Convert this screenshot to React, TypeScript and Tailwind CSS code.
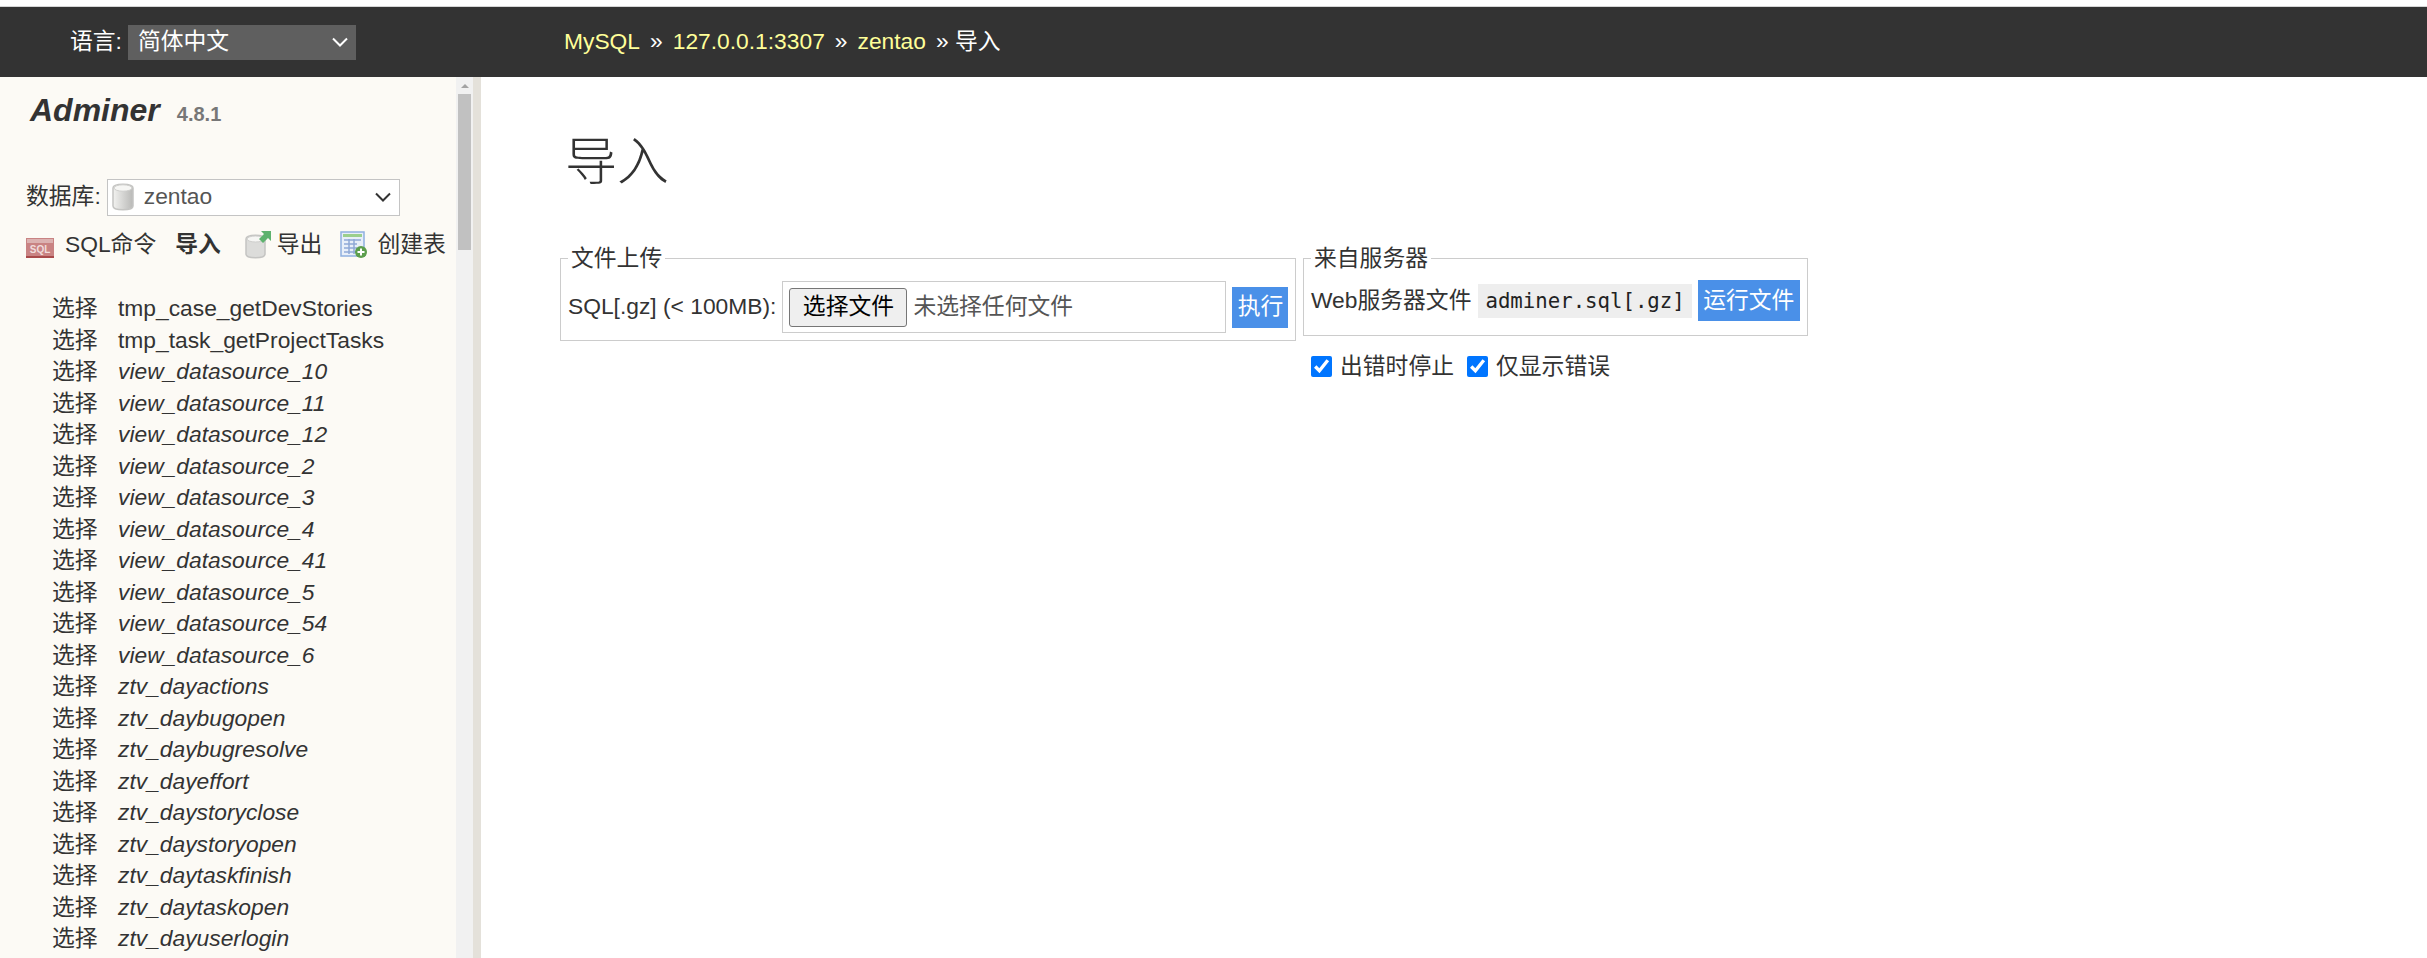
const tables = [
  "tmp_case_getDevStories",
  "tmp_task_getProjectTasks",
  "view_datasource_10",
  "view_datasource_11",
  "view_datasource_12",
  "view_datasource_2",
  "view_datasource_3",
  "view_datasource_4",
  "view_datasource_41",
  "view_datasource_5",
  "view_datasource_54",
  "view_datasource_6",
  "ztv_dayactions",
  "ztv_daybugopen",
  "ztv_daybugresolve",
  "ztv_dayeffort",
  "ztv_daystoryclose",
  "ztv_daystoryopen",
  "ztv_daytaskfinish",
  "ztv_daytaskopen",
  "ztv_dayuserlogin",
]

function Chevron({ color }: { color: string }) {
  return (
    <svg width="16" height="10" viewBox="0 0 16 10" fill="none" stroke={color} strokeWidth="2">
      <path d="M1 1.5 L8 8.5 L15 1.5" />
    </svg>
  )
}

function DbIcon() {
  return (
    <svg width="24" height="28" viewBox="0 0 24 28">
      <defs>
        <linearGradient id="cyl" x1="0" x2="1" y1="0" y2="0">
          <stop offset="0" stopColor="#f2f2f0" />
          <stop offset="0.55" stopColor="#d2d2d0" />
          <stop offset="1" stopColor="#b9b9b7" />
        </linearGradient>
      </defs>
      <path d="M2 5 C2 0 22 0 22 5 V23 C22 28 2 28 2 23 Z" fill="url(#cyl)" stroke="#c4c4c2" strokeWidth="1.5" />
      <ellipse cx="12" cy="5" rx="9" ry="3.2" fill="#f6f6f4" stroke="#cfcfcd" />
    </svg>
  )
}

function SqlIcon() {
  return (
    <svg width="28" height="20" viewBox="0 0 28 20" className="mt-[6px]">
      <rect x="0" y="0" width="28" height="20" fill="#c98383" />
      <rect x="1" y="1" width="26" height="4" fill="#dcb2b1" />
      <rect x="0" y="18" width="28" height="2" fill="#a94a4b" />
      <text x="14" y="15" textAnchor="middle" fontFamily="Liberation Sans" fontWeight="700" fontSize="10" fill="#f1dcdc">SQL</text>
    </svg>
  )
}

function ExportIcon() {
  return (
    <svg width="26" height="28" viewBox="0 0 26 28">
      <path d="M1 8 C1 3 20 3 20 8 V23 C20 28 1 28 1 23 Z" fill="#dcdcda" stroke="#c4c4c2" strokeWidth="1.5" />
      <ellipse cx="10.5" cy="8" rx="8.5" ry="3" fill="#f6f6f4" stroke="#cfcfcd" />
      <path d="M16 0 H26 V10 L23 7 L18 12 L14 8 L19 3 Z" fill="#5eb26e" />
    </svg>
  )
}

function CreateIcon() {
  return (
    <svg width="28" height="28" viewBox="0 0 28 28">
      <rect x="1" y="1" width="23" height="24" fill="#e8eff9" stroke="#8fb0e0" strokeWidth="1.5" />
      <rect x="3" y="3" width="19" height="3" fill="#9bcf8d" />
      <path d="M4 9 H21 M4 13 H17 M4 17 H17 M4 21 H17 M9 8 V23 M14 8 V23" stroke="#8fa9d6" strokeWidth="1.5" />
      <circle cx="21" cy="21" r="6" fill="#5c9e4d" />
      <path d="M17.5 21 H24.5 M21 17.5 V24.5" stroke="#fff" strokeWidth="2" />
    </svg>
  )
}

function Check({ label }: { label: string }) {
  return (
    <label className="flex items-center gap-[8px]">
      <input type="checkbox" defaultChecked className="w-[21px] h-[21px] m-0 accent-[#0075ff]" />
      <span>{label}</span>
    </label>
  )
}

export default function App() {
  return (
    <div
      className="h-[958px] w-[2427px] overflow-hidden bg-white text-[#333] text-[22.8px] leading-[31.5px]"
      style={{ fontFamily: '"Liberation Sans", "Noto Sans CJK SC", sans-serif' }}
    >
      {/* top bar */}
      <header className="mt-[6px] h-[71px] border-t border-[#d5d5d5] bg-[#333] text-white flex items-center">
        <div className="w-[564px] pl-[70px] flex items-center gap-[6px]">
          <span>语言:</span>
          <div className="w-[228px] h-[35px] pl-[10px] pr-[8px] bg-[#5f5f5f] flex items-center justify-between">
            <span>简体中文</span>
            <Chevron color="#fff" />
          </div>
        </div>
        <nav className="flex items-center gap-[10px]">
          <a className="text-[#ffff99]">MySQL</a>
          <span>»</span>
          <a className="text-[#ffff99]">127.0.0.1:3307</a>
          <span>»</span>
          <a className="text-[#ffff99]">zentao</a>
          <span>»&nbsp;导入</span>
        </nav>
      </header>

      <div className="flex h-[881px]">
        {/* sidebar */}
        <aside className="w-[456px] bg-[#fcfaf5] pl-[26px]">
          <div className="flex items-baseline pt-[16px] pl-[4px] h-[102px]">
            <span className="text-[32px] leading-[34px] font-bold italic">Adminer</span>
            <span className="ml-[17px] text-[20px] font-bold text-[#777]">4.8.1</span>
          </div>
          <div className="flex items-center gap-[6px] h-[36px]">
            <span>数据库:</span>
            <div className="w-[293px] h-[37px] border border-[#c4c4c4] bg-white pl-[3px] pr-[8px] flex items-center">
              <DbIcon />
              <span className="ml-[9px] flex-1 text-[#555]">zentao</span>
              <Chevron color="#333" />
            </div>
          </div>
          <div className="flex items-center h-[28px] mt-[16px] whitespace-nowrap">
            <SqlIcon />
            <span className="ml-[11px]">SQL命令</span>
            <b className="ml-[19px]">导入</b>
            <span className="ml-[24px]"><ExportIcon /></span>
            <span className="ml-[6px]">导出</span>
            <span className="ml-[18px]"><CreateIcon /></span>
            <span className="ml-[9px]">创建表</span>
          </div>
          <ul className="mt-[34px] pl-[26px]">
            {tables.map((t, i) => (
              <li key={t} className="flex h-[31.5px]">
                <span className="w-[66px]">选择</span>
                <span className={i < 2 ? "" : "italic"}>{t}</span>
              </li>
            ))}
          </ul>
        </aside>

        {/* scrollbar */}
        <div className="w-[17px] bg-[#f1f1f1] px-[2px]">
          <div className="h-[17px] flex items-center justify-center">
            <div className="w-0 h-0 border-x-[4px] border-x-transparent border-b-[4px] border-b-[#a3a3a3]" />
          </div>
          <div className="h-[156px] bg-[#c1c1c1]" />
        </div>
        <div className="w-[8px] bg-[#e4e1da]" />

        {/* content */}
        <main className="flex-1 pl-[84px]">
          <h2 className="mt-[53px] text-[52px] leading-[64px] font-light">导入</h2>
          <div className="flex items-start gap-[7px] mt-[52px] -ml-[5px]">
            <div>
              <fieldset className="w-[736px] h-[95px] border border-[#ccc] pl-[7px]">
                <legend className="px-[3px] leading-[24px]">文件上传</legend>
                <div className="flex items-center mt-[11px]">
                  <span>SQL[.gz] (&lt; 100MB):</span>
                  <div className="ml-[6px] w-[444px] h-[52px] border border-[#ccc] pl-[6px] flex items-center">
                    <button className="w-[118px] h-[39px] border border-[#767676] rounded-[3px] bg-[#efefef] text-black">选择文件</button>
                    <span className="ml-[6px] text-[#555]">未选择任何文件</span>
                  </div>
                  <button className="ml-[6px] w-[56px] h-[41px] bg-[#4a90e8] text-white">执行</button>
                </div>
              </fieldset>
            </div>
            <div>
              <fieldset className="w-[505px] h-[90px] border border-[#ccc] pl-[7px]">
                <legend className="px-[3px] leading-[24px]">来自服务器</legend>
                <div className="flex items-center h-[37px] mt-[12px]">
                  <span>Web服务器文件</span>
                  <code
                    className="ml-[7px] px-[7px] h-[34px] bg-[#eee] text-[20.7px] leading-[34px] text-[#222]"
                    style={{ fontFamily: '"DejaVu Sans Mono", monospace' }}
                  >
                    adminer.sql[.gz]
                  </code>
                  <button className="ml-[6px] w-[102px] h-[41px] bg-[#4a90e8] text-white">运行文件</button>
                </div>
              </fieldset>
              <div className="flex items-center gap-[13px] mt-[15px] pl-[8px]">
                <Check label="出错时停止" />
                <Check label="仅显示错误" />
              </div>
            </div>
          </div>
        </main>
      </div>
    </div>
  )
}
